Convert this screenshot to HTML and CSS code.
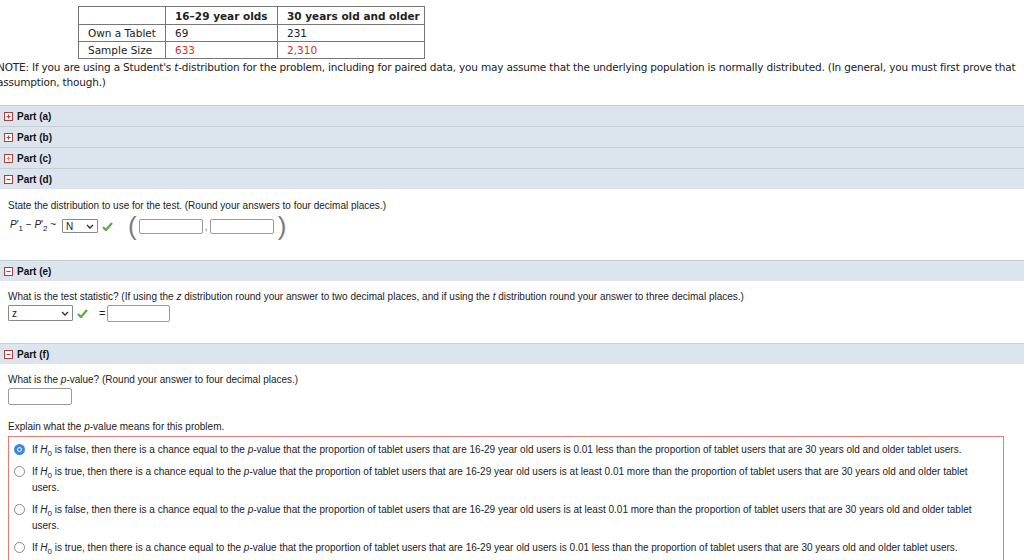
FILE: index.html
```html
<!DOCTYPE html>
<html lang="en">
<head>
  <meta charset="UTF-8" />
  <title>Hypothesis Test: Tablet Owners</title>
  <link rel="stylesheet" href="styles.css">
</head>
<body>
  <table class="data-table">
    <tr>
      <th class="c1"></th>
      <th class="c2">16–29 year olds</th>
      <th class="c3">30 years old and older</th>
    </tr>
    <tr>
      <td>Own a Tablet</td>
      <td>69</td>
      <td>231</td>
    </tr>
    <tr>
      <td>Sample Size</td>
      <td class="red">633</td>
      <td class="red">2,310</td>
    </tr>
  </table>

  <p class="note">NOTE: If you are using a Student's <i>t</i>-distribution for the problem, including for paired data, you may assume that the underlying population is normally distributed. (In general, you must first prove that assumption, though.)</p>

  <div class="parts">
    <div class="part-head">
      <svg class="toggle" width="9" height="9" viewBox="0 0 9 9"><rect x="0.5" y="0.5" width="8" height="8" fill="#fff" stroke="#a5443f"/><path d="M2.5 4.5h4M4.5 2.5v4" stroke="#a5443f" stroke-width="1.2"/></svg>
      <span>Part (a)</span>
    </div>
    <div class="part-head">
      <svg class="toggle" width="9" height="9" viewBox="0 0 9 9"><rect x="0.5" y="0.5" width="8" height="8" fill="#fff" stroke="#a5443f"/><path d="M2.5 4.5h4M4.5 2.5v4" stroke="#a5443f" stroke-width="1.2"/></svg>
      <span>Part (b)</span>
    </div>
    <div class="part-head">
      <svg class="toggle" width="9" height="9" viewBox="0 0 9 9"><rect x="0.5" y="0.5" width="8" height="8" fill="#fff" stroke="#a5443f"/><path d="M2.5 4.5h4M4.5 2.5v4" stroke="#c98784" stroke-width="1.2"/></svg>
      <span>Part (c)</span>
    </div>
    <div class="part-head">
      <svg class="toggle" width="9" height="9" viewBox="0 0 9 9"><rect x="0.5" y="0.5" width="8" height="8" fill="#fff" stroke="#a5443f"/><path d="M2.5 4.5h4" stroke="#a5443f" stroke-width="1.2"/></svg>
      <span>Part (d)</span>
    </div>
    <div class="part-body body-d">
      <p class="q">State the distribution to use for the test. (Round your answers to four decimal places.)</p>
      <div class="answer-row">
        <span class="expr"><i>P</i>′<sub>1</sub> − <i>P</i>′<sub>2</sub> ~</span>
        <span class="sel sel-n">N<svg width="8" height="5" viewBox="0 0 8 5"><path d="M1 1l3 3 3-3" fill="none" stroke="#333" stroke-width="1.4"/></svg></span>
        <svg class="check" width="11" height="9" viewBox="0 0 11 9"><path d="M1 5l3 3 6-7" fill="none" stroke="#5fad4a" stroke-width="2.4"/></svg>
        <span class="paren">(</span>
        <span class="field"></span>
        <span class="comma">,</span>
        <span class="field"></span>
        <span class="paren">)</span>
      </div>
    </div>

    <div class="part-head">
      <svg class="toggle" width="9" height="9" viewBox="0 0 9 9"><rect x="0.5" y="0.5" width="8" height="8" fill="#fff" stroke="#a5443f"/><path d="M2.5 4.5h4" stroke="#a5443f" stroke-width="1.2"/></svg>
      <span>Part (e)</span>
    </div>
    <div class="part-body body-e">
      <p class="q">What is the test statistic? (If using the <i>z</i> distribution round your answer to two decimal places, and if using the <i>t</i> distribution round your answer to three decimal places.)</p>
      <div class="answer-row small-row">
        <span class="sel sel-z">z<svg width="8" height="5" viewBox="0 0 8 5"><path d="M1 1l3 3 3-3" fill="none" stroke="#333" stroke-width="1.4"/></svg></span>
        <svg class="check" width="11" height="9" viewBox="0 0 11 9"><path d="M1 5l3 3 6-7" fill="none" stroke="#5fad4a" stroke-width="2.4"/></svg>
        <span class="eq">=</span>
        <span class="field"></span>
      </div>
    </div>

    <div class="part-head">
      <svg class="toggle" width="9" height="9" viewBox="0 0 9 9"><rect x="0.5" y="0.5" width="8" height="8" fill="#fff" stroke="#a5443f"/><path d="M2.5 4.5h4" stroke="#a5443f" stroke-width="1.2"/></svg>
      <span>Part (f)</span>
    </div>
    <div class="part-body body-f">
      <p class="q">What is the <i>p</i>-value? (Round your answer to four decimal places.)</p>
      <span class="field pval"></span>
      <p class="q explain">Explain what the <i>p</i>-value means for this problem.</p>
      <div class="choices">
        <div class="choice">
          <span class="radio checked"></span>
          <span>If <i>H</i><sub>0</sub> is false, then there is a chance equal to the <i>p</i>-value that the proportion of tablet users that are 16-29 year old users is 0.01 less than the proportion of tablet users that are 30 years old and older tablet users.</span>
        </div>
        <div class="choice">
          <span class="radio"></span>
          <span>If <i>H</i><sub>0</sub> is true, then there is a chance equal to the <i>p</i>-value that the proportion of tablet users that are 16-29 year old users is at least 0.01 more than the proportion of tablet users that are 30 years old and older tablet users.</span>
        </div>
        <div class="choice">
          <span class="radio"></span>
          <span>If <i>H</i><sub>0</sub> is false, then there is a chance equal to the <i>p</i>-value that the proportion of tablet users that are 16-29 year old users is at least 0.01 more than the proportion of tablet users that are 30 years old and older tablet users.</span>
        </div>
        <div class="choice">
          <span class="radio"></span>
          <span>If <i>H</i><sub>0</sub> is true, then there is a chance equal to the <i>p</i>-value that the proportion of tablet users that are 16-29 year old users is 0.01 less than the proportion of tablet users that are 30 years old and older tablet users.</span>
        </div>
      </div>
    </div>
  </div>
</body>
</html>
```

FILE: styles.css
```css
body {
  margin: 0;
  font-family: "Liberation Sans", Arial, sans-serif;
  font-size: 10px;
  color: #222;
  background: #fff;
}

.data-table {
  border-collapse: collapse;
  margin: 6px 0 0 78px;
  font-family: "DejaVu Sans", Verdana, sans-serif;
  font-size: 10.5px;
  color: #222;
}

.data-table th,
.data-table td {
  border: 1px solid #777;
  text-align: left;
  padding: 0 0 0 9px;
  height: 16px;
}

.data-table th {
  height: 17px;
  font-weight: bold;
}

.data-table .c1 { width: 77px; }
.data-table .c2 { width: 102px; }
.data-table .c3 { width: 137px; }

.red {
  color: #d0322c;
}

.note {
  margin: 1px 0 0 -3px;
  font-family: "DejaVu Sans", Verdana, sans-serif;
  font-size: 10.5px;
  letter-spacing: -0.18px;
  line-height: 15px;
  color: #222;
}

.parts {
  margin-top: 15px;
}

.part-head {
  display: flex;
  align-items: center;
  gap: 4px;
  height: 20px;
  padding-left: 4px;
  background: #dce5ee;
  border-top: 1px solid #c6ced6;
  font-weight: bold;
  font-size: 10px;
  color: #111;
}

.toggle {
  display: block;
}

.part-body {
  padding: 9px 0 22px 8px;
}

.body-e,
.body-f {
  padding-top: 8px;
}

.body-f {
  padding-bottom: 0;
}

.q {
  margin: 0;
  line-height: 16px;
}

.answer-row {
  display: flex;
  align-items: center;
  height: 24px;
}

.small-row {
  height: 16px;
}

.expr {
  margin-left: 2px;
  width: 52px;
  font-size: 10px;
}

.expr sub {
  font-size: 8px;
}

.sel {
  display: flex;
  align-items: center;
  justify-content: space-between;
  box-sizing: border-box;
  height: 14px;
  padding: 0 3px 0 3px;
  border: 1px solid #888;
  border-radius: 1px;
  background: #fff;
  font-size: 10px;
}

.sel-n { width: 36px; }
.sel-z { width: 65px; height: 16px; }

.check {
  margin-left: 4px;
}

.paren {
  font-size: 26px;
  font-weight: 300;
  color: #7a7a7a;
  line-height: 24px;
  margin: 0 2px 0 15px;
}

.field + .paren {
  margin: 0 0 0 4px;
}

.field {
  display: block;
  box-sizing: border-box;
  width: 64px;
  height: 15px;
  border: 1px solid #999;
  border-radius: 2px;
  background: #fff;
}

.comma {
  width: 7px;
  text-align: center;
  color: #777;
}

.eq {
  margin: 0 2px 0 11px;
  font-size: 11px;
}

.small-row .field {
  width: 63px;
  height: 17px;
}

.pval {
  width: 64px;
  height: 17px;
}

.explain {
  margin-top: 14px;
}

.choices {
  margin: 1px 20px 0 0;
  padding: 5px 30px 10px 5px;
  border: 1px solid #e07d78;
}

.choice {
  display: flex;
  align-items: flex-start;
  gap: 7px;
  line-height: 16px;
  margin-bottom: 6px;
}

.choice sub {
  font-size: 8px;
  line-height: 0;
}

.radio {
  flex: none;
  box-sizing: border-box;
  width: 11px;
  height: 11px;
  margin-top: 2px;
  border: 1px solid #888;
  border-radius: 50%;
  background: #fff;
}

.radio.checked {
  border: 3px solid #3b87e6;
  background: #3b87e6;
  box-shadow: inset 0 0 0 1px #fff;
}
```
